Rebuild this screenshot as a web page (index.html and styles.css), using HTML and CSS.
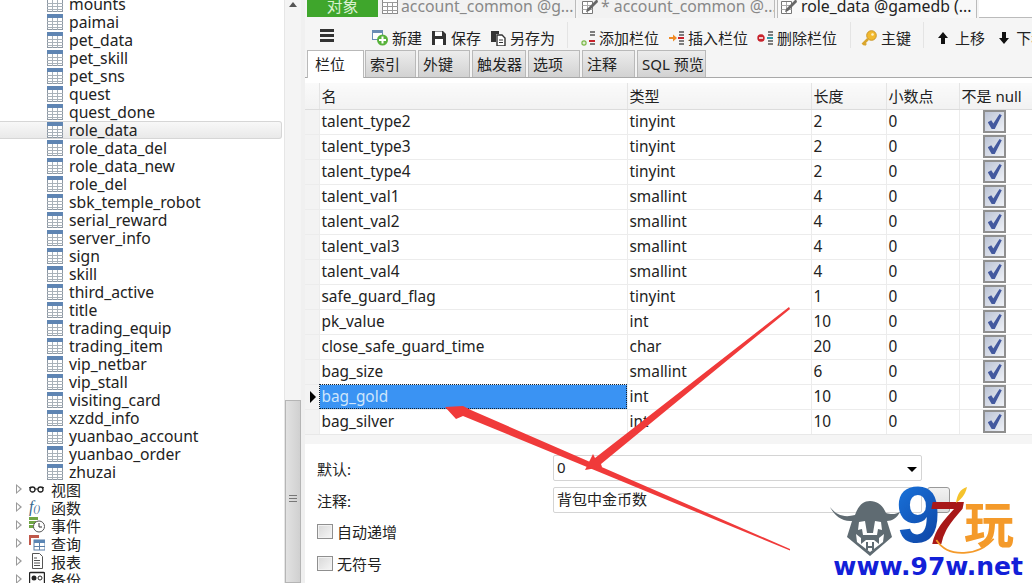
FILE: index.html
```html
<!DOCTYPE html>
<html lang="zh">
<head>
<meta charset="utf-8">
<title>role_data @gamedb</title>
<link rel="stylesheet" href="styles.css">
</head>
<body>
<div class="app">
  <aside class="side">
    <div class="tree">
      <ul class="tables">
        <li><svg class="ti"><use href="#tbl"/></svg>mounts</li>
        <li><svg class="ti"><use href="#tbl"/></svg>paimai</li>
        <li><svg class="ti"><use href="#tbl"/></svg>pet_data</li>
        <li><svg class="ti"><use href="#tbl"/></svg>pet_skill</li>
        <li><svg class="ti"><use href="#tbl"/></svg>pet_sns</li>
        <li><svg class="ti"><use href="#tbl"/></svg>quest</li>
        <li><svg class="ti"><use href="#tbl"/></svg>quest_done</li>
        <li class="cur"><svg class="ti"><use href="#tbl"/></svg>role_data</li>
        <li><svg class="ti"><use href="#tbl"/></svg>role_data_del</li>
        <li><svg class="ti"><use href="#tbl"/></svg>role_data_new</li>
        <li><svg class="ti"><use href="#tbl"/></svg>role_del</li>
        <li><svg class="ti"><use href="#tbl"/></svg>sbk_temple_robot</li>
        <li><svg class="ti"><use href="#tbl"/></svg>serial_reward</li>
        <li><svg class="ti"><use href="#tbl"/></svg>server_info</li>
        <li><svg class="ti"><use href="#tbl"/></svg>sign</li>
        <li><svg class="ti"><use href="#tbl"/></svg>skill</li>
        <li><svg class="ti"><use href="#tbl"/></svg>third_active</li>
        <li><svg class="ti"><use href="#tbl"/></svg>title</li>
        <li><svg class="ti"><use href="#tbl"/></svg>trading_equip</li>
        <li><svg class="ti"><use href="#tbl"/></svg>trading_item</li>
        <li><svg class="ti"><use href="#tbl"/></svg>vip_netbar</li>
        <li><svg class="ti"><use href="#tbl"/></svg>vip_stall</li>
        <li><svg class="ti"><use href="#tbl"/></svg>visiting_card</li>
        <li><svg class="ti"><use href="#tbl"/></svg>xzdd_info</li>
        <li><svg class="ti"><use href="#tbl"/></svg>yuanbao_account</li>
        <li><svg class="ti"><use href="#tbl"/></svg>yuanbao_order</li>
        <li><svg class="ti"><use href="#tbl"/></svg>zhuzai</li>
      </ul>
      <ul class="groups">
        <li><i class="tri"></i><svg class="gi" viewBox="0 0 16 16"><circle cx="3.500" cy="8.500" r="2.500" fill="none" stroke="#222" stroke-width="1.300"/><circle cx="11.500" cy="8.500" r="2.500" fill="none" stroke="#222" stroke-width="1.300"/><path d="M6 8h3M0 7l1.500-1M15 7l-1.500-1" stroke="#222" fill="none"/></svg>视图</li>
        <li><i class="tri"></i><span class="gi fx">f<small>()</small></span>函数</li>
        <li><i class="tri"></i><svg class="gi" viewBox="0 0 16 16"><rect x="0" y="0" width="9" height="3" fill="#6fa544"/><rect x="0" y="4" width="7" height="3" fill="#6fa544"/><rect x="0" y="8" width="6" height="3" fill="#6fa544"/><circle cx="10" cy="9.500" r="5.500" fill="#fff" stroke="#555"/><path d="M10 6v4h3" stroke="#333" fill="none"/></svg>事件</li>
        <li><i class="tri"></i><svg class="gi" viewBox="0 0 16 16"><rect x="0" y="0" width="10" height="3" fill="#c0584a"/><rect x="0" y="3" width="2" height="7" fill="#c0584a"/><rect x="5" y="5" width="11" height="10" fill="#fff" stroke="#5b7fa8"/><rect x="5" y="5" width="11" height="3" fill="#5b86b5"/><path d="M10.500 8v7M5 11.500h11" stroke="#5b7fa8"/></svg>查询</li>
        <li><i class="tri"></i><svg class="gi" viewBox="0 0 16 16"><path d="M3.500.5h7l3 3v12h-10z" fill="#fff" stroke="#555"/><path d="M5 5h3M5 7.500h6M5 10h6M5 12.500h6" stroke="#555"/></svg>报表</li>
        <li><i class="tri"></i><svg class="gi" viewBox="0 0 16 16"><rect x="0.500" y="1.500" width="15" height="13" rx="1" fill="#fff" stroke="#222" stroke-width="1.400"/><circle cx="5" cy="7" r="2.500" fill="#222"/><circle cx="11" cy="7" r="2" fill="none" stroke="#222"/></svg>备份</li>
      </ul>
    </div>
    <div class="vbar">
      <i class="up"></i>
      <div class="thumb"><b></b><b></b><b></b></div>
    </div>
  </aside>

  <main class="main">
    <nav class="doctabs">
      <div class="dt obj">对象</div>
      <div class="dt off first"><svg class="dti" viewBox="0 0 16 16"><use href="#tblg"/></svg>account_common @g...</div>
      <div class="dt off second"><svg class="dti" viewBox="0 0 16 16"><use href="#pen"/></svg>* account_common @...</div>
      <div class="dt on"><svg class="dti" viewBox="0 0 16 16"><use href="#pen"/></svg>role_data @gamedb (...</div>
      <div class="dt rest"></div>
    </nav>

    <div class="toolbar">
      <span class="menu"><b></b><b></b><b></b></span>
      <span class="tb t-new"><svg class="bi" viewBox="0 0 16 16"><rect x=".5" y=".5" width="10" height="9" fill="#fff" stroke="#6a8db5"/><rect x="0" y="0" width="11" height="3" fill="#6a8db5"/><circle cx="10.500" cy="10" r="5.500" fill="#58b23b"/><path d="M10.500 6.500v7M7 10h7" stroke="#fff" stroke-width="2"/></svg>新建</span>
      <span class="tb"><svg class="bi" viewBox="0 0 16 16"><path d="M1 1h11l3 3v11H1z" fill="#333"/><rect x="4" y="1.500" width="7" height="4.500" fill="#fff"/><rect x="4" y="9" width="8" height="6" fill="#fff"/></svg>保存</span>
      <span class="tb"><svg class="bi" viewBox="0 0 16 16"><path d="M1 1h8v3h-3v8H1z" fill="#333"/><path d="M7 5h5l3 3v8H7z" fill="#fff" stroke="#333" stroke-width="1.400"/><path d="M9 10h4M9 12.500h4" stroke="#333"/></svg>另存为</span>
      <i class="sep s1"></i>
      <span class="tb"><svg class="bi" viewBox="0 0 16 16"><use href="#cols"/><path d="M10 11h6" stroke="#c8232c" stroke-width="2"/><circle cx="5" cy="13" r="2.700" fill="#7cb84a"/><path d="M5 11.500v3M3.500 13h3" stroke="#fff"/></svg>添加栏位</span>
      <span class="tb"><svg class="bi" viewBox="0 0 16 16"><use href="#cols"/><path d="M1 8h5" stroke="#f08a24" stroke-width="2"/><path d="M5 4.500l4 3.500-4 3.500z" fill="#f08a24"/><path d="M10 8h6" stroke="#c8232c" stroke-width="2"/></svg>插入栏位</span>
      <span class="tb"><svg class="bi" viewBox="0 0 16 16"><use href="#cols"/><circle cx="4" cy="8" r="3.700" fill="#c8232c"/><path d="M2 8h4" stroke="#fff" stroke-width="1.500"/><path d="M10 8h6" stroke="#2a9aa8" stroke-width="2"/></svg>删除栏位</span>
      <i class="sep s2"></i>
      <span class="tb"><svg class="bi" viewBox="0 0 16 16"><circle cx="10.500" cy="5.500" r="4.800" fill="#f2b92e" stroke="#c9962a"/><circle cx="11.500" cy="4.500" r="1.300" fill="#fff3c4"/><path d="M7 9l-5.500 5.500M3 13l2 2" stroke="#d9a52c" stroke-width="2.600" fill="none"/></svg>主键</span>
      <i class="sep s3"></i>
      <span class="tb arrow"><svg class="ai" viewBox="0 0 12 14"><path d="M6 1l5 6H8v6H4V7H1z" fill="#111"/></svg>上移</span>
      <span class="tb arrow"><svg class="ai" viewBox="0 0 12 14"><path d="M6 13l5-6H8V1H4v6H1z" fill="#111"/></svg>下移</span>
    </div>

    <div class="tabs">
      <div class="tab act w57">栏位</div>
      <div class="tab w51">索引</div>
      <div class="tab w52">外键</div>
      <div class="tab w54">触发器</div>
      <div class="tab w52">选项</div>
      <div class="tab w53">注释</div>
      <div class="tab w69">SQL 预览</div>
    </div>

    <section class="grid-wrap">
      <table class="grid">
        <colgroup><col class="c0"><col class="c1"><col class="c2"><col class="c3"><col class="c4"><col class="c5"></colgroup>
        <thead><tr><th></th><th>名</th><th>类型</th><th>长度</th><th>小数点</th><th>不是 null</th></tr></thead>
        <tbody>
          <tr><td class="g"></td><td>talent_type2</td><td>tinyint</td><td>2</td><td>0</td><td><i class="ck"></i></td></tr>
          <tr><td class="g"></td><td>talent_type3</td><td>tinyint</td><td>2</td><td>0</td><td><i class="ck"></i></td></tr>
          <tr><td class="g"></td><td>talent_type4</td><td>tinyint</td><td>2</td><td>0</td><td><i class="ck"></i></td></tr>
          <tr><td class="g"></td><td>talent_val1</td><td>smallint</td><td>4</td><td>0</td><td><i class="ck"></i></td></tr>
          <tr><td class="g"></td><td>talent_val2</td><td>smallint</td><td>4</td><td>0</td><td><i class="ck"></i></td></tr>
          <tr><td class="g"></td><td>talent_val3</td><td>smallint</td><td>4</td><td>0</td><td><i class="ck"></i></td></tr>
          <tr><td class="g"></td><td>talent_val4</td><td>smallint</td><td>4</td><td>0</td><td><i class="ck"></i></td></tr>
          <tr><td class="g"></td><td>safe_guard_flag</td><td>tinyint</td><td>1</td><td>0</td><td><i class="ck"></i></td></tr>
          <tr><td class="g"></td><td>pk_value</td><td>int</td><td>10</td><td>0</td><td><i class="ck"></i></td></tr>
          <tr><td class="g"></td><td>close_safe_guard_time</td><td>char</td><td>20</td><td>0</td><td><i class="ck"></i></td></tr>
          <tr><td class="g"></td><td>bag_size</td><td>smallint</td><td>6</td><td>0</td><td><i class="ck"></i></td></tr>
          <tr class="sel"><td class="g"><i class="ptr"></i></td><td class="name">bag_gold</td><td>int</td><td>10</td><td>0</td><td><i class="ck"></i></td></tr>
          <tr><td class="g"></td><td>bag_silver</td><td>int</td><td>10</td><td>0</td><td><i class="ck"></i></td></tr>
        </tbody>
      </table>
    </section>

    <section class="form">
      <div class="frow"><label class="lab">默认:</label><div class="inp combo">0<i class="caret"></i></div></div>
      <div class="frow"><label class="lab">注释:</label><div class="inp">背包中金币数</div><button class="more"></button></div>
      <div class="crow first-c"><i class="box"></i>自动递增</div>
      <div class="crow"><i class="box"></i>无符号</div>
    </section>
  </main>
</div>

<svg class="marks" viewBox="0 0 1032 583">
  <polygon fill="#f03a3a" points="790,550.500 463,416 456,419 445,407 463,406 472,410.500 790,549"/>
  <polygon fill="#f03a3a" points="790,309 601,464 602,467 585,470 593,454 595,458 789,307"/>
</svg>

<div class="logo">
  <svg class="viking" viewBox="0 0 72 58">
    <path d="M0 7C6 15 14 18 25 15 28 6 33 1 40 1 48 1 53 6 56 13 62 15 66 14 70 12 67 18 62 21 57 21L62 37 40 56 17 37 22 21C12 22 4 15 0 7Z" fill="#5f6b72"/>
    <path d="M29 22 35 21 37 33H43L45 21 51 22 52 30 48 29 47 35H33L32 29 28 30Z" fill="#fff"/>
    <path d="M26 34 31 38V44L36 40H44L49 44V38L54 34 53 42 40 52 27 42Z" fill="#fff"/>
    <path d="M36 42H38V46H42V42H44V50H42V48H38V50H36Z" fill="#5f6b72"/>
  </svg>
  <span class="nine">9</span><span class="seven">7</span><span class="wan">玩</span>
  <svg class="swoosh" viewBox="0 0 90 30"><path d="M2 6c18 28 64 24 86-2" stroke="#f49a2a" stroke-width="2.500" fill="none"/></svg>
  <svg class="flame" viewBox="0 0 11 16"><path d="M11 0C4 2 1 8 0 16c4-3 9-7 11-16z" fill="#f5c32c"/></svg>
  <span class="site">www.97w.net</span>
</div>

<svg class="defs" aria-hidden="true">
  <defs>
    <symbol id="tbl" viewBox="0 0 16 16">
      <rect x=".5" y=".5" width="15" height="15" fill="#fff" stroke="#8d98a3"/>
      <rect x="0" y="0" width="16" height="4" fill="#5f85b3"/>
      <path d="M5.500 4v12M10.500 4v12M0 7.500h16M0 10.500h16M0 13.500h16" stroke="#a9b2ba"/>
    </symbol>
    <symbol id="tblg" viewBox="0 0 16 16">
      <rect x=".5" y=".5" width="15" height="15" fill="#fff" stroke="#8a8a8a"/>
      <path d="M.5 4.500h15M5.500 4v12M10.500 4v12M0 8.500h16M0 12.500h16" stroke="#9a9a9a"/>
    </symbol>
    <symbol id="pen" viewBox="0 0 16 16">
      <path d="M.5 3.500h10v12H.5z" fill="#fff" stroke="#777"/>
      <path d="M.5 7.500h10M.5 11.500h10M5.500 4v11" stroke="#aaa"/>
      <path d="M15 1l1 3-9 9-3 1 1-3z" fill="#666"/>
    </symbol>
    <symbol id="cols" viewBox="0 0 16 16">
      <path d="M11 2h5M11 5h5M11 11h5M11 14h5" stroke="#555" stroke-width="1.600"/>
    </symbol>
  </defs>
</svg>
</body>
</html>
```
FILE: styles.css
```css
* { box-sizing: border-box; }
html, body { margin: 0; height: 100%; overflow: hidden; }
body {
  font-family: "Noto Sans", "Noto Sans CJK SC", sans-serif;
  font-size: 15px;
  color: #222;
  background: #fff;
  position: relative;
}
ul { list-style: none; margin: 0; padding: 0; }
.app { display: flex; height: 583px; }

/* sidebar */
.side { width: 305px; flex: none; display: flex; overflow: hidden; background: #fff; }
.tree { width: 284px; flex: none; margin-top: -5px; }
.tables { font-size: 15.7px; }
.tables li { height: 18px; line-height: 18px; padding-left: 47px; display: flex; align-items: center; white-space: nowrap; }
.ti { width: 16px; height: 16px; margin-right: 6px; flex: none; }
.tables .cur { background: linear-gradient(#f8f8f8, #e9e9e9); border: 1px solid #d6d6d6; border-left: 0; border-radius: 0 3px 3px 0; width: 282px; }
.groups { margin-top: -1px; }
.groups li { height: 18px; display: flex; align-items: center; padding-left: 16px; white-space: nowrap; }
.tri { position: relative; width: 6px; height: 10px; margin-right: 7px; background: #9a9a9a; clip-path: polygon(0 0, 100% 50%, 0 100%); flex: none; }
.tri::after { content: ""; position: absolute; left: 1px; top: 2px; width: 3px; height: 6px; background: #fff; clip-path: polygon(0 0, 100% 50%, 0 100%); }
.gi { width: 16px; height: 16px; margin-right: 6px; flex: none; }
.fx { font-family: "Liberation Serif", serif; font-style: italic; color: #36688f; font-size: 16px; line-height: 16px; white-space: nowrap; }
.fx small { font-size: 10px; }
.vbar { width: 17px; flex: none; background: #f4f4f4; border-left: 1px solid #e6e6e6; position: relative; display: flex; flex-direction: column; }
.up { display: block; width: 0; height: 0; margin: 2px auto 0; border: 4px solid transparent; border-top: 0; border-bottom: 5px solid #555; }
.thumb { margin-top: 393px; flex: 1; background: linear-gradient(90deg, #e2e2e2, #d0d0d0); border: 1px solid #b5b5b5; display: flex; flex-direction: column; gap: 2px; align-items: center; padding-top: 94px; }
.thumb b { display: block; width: 8px; height: 1px; background: #777; }
.side::after { content: ""; width: 4px; flex: none; background: #f0f0f0; }

/* right panel */
.main { flex: 1; min-width: 0; background: #f5f5f5; display: flex; flex-direction: column; }
.doctabs { display: flex; height: 24px; margin-top: -6px; padding-left: 2px; gap: 2px; overflow: hidden; font-size: 15.8px; flex: none; }
.dt { height: 24px; display: flex; align-items: center; white-space: nowrap; overflow: hidden; flex: none; }
.dti { width: 16px; height: 16px; flex: none; }
.obj { width: 71px; height: 23px; background: #3fa62c; color: #d8f0cf; justify-content: center; }
.off { color: #888; background: #f2f2f2; border-right: 1px solid #bbb; }
.first { width: 196px; padding-left: 2px; }
.first .dti { margin-right: 3px; }
.second { width: 197px; padding-left: 4px; }
.second .dti { margin-right: 3px; }
.on { width: 200px; padding-left: 3px; background: #f8f8f8; color: #222; border: 1px solid #bbb; border-top: 0; border-bottom: 0; }
.on .dti { margin-right: 4px; }
.rest { flex: 1; background: #fff; border-bottom: 1px solid #bbb; }

.toolbar { height: 32px; flex: none; display: flex; align-items: center; padding: 8px 0 0 15px; gap: 9px; white-space: nowrap; overflow: hidden; line-height: 20px; }
.menu { display: flex; flex-direction: column; gap: 2px; width: 14px; flex: none; margin: -6px 29px 0 0; }
.menu b { display: block; height: 3px; background: #333; }
.tb { display: flex; align-items: center; flex: none; gap: 4px; }
.bi { width: 16px; height: 16px; flex: none; }
.ai { width: 12px; height: 14px; flex: none; margin-right: 2px; }
.sep { width: 1px; height: 26px; background: #e4e4e4; flex: none; margin-top: -6px; }
.s1 { margin-left: 3px; margin-right: 2px; }
.s2 { margin-left: 4px; margin-right: 1px; }
.s3 { margin-left: 3px; margin-right: 4px; }
.arrow + .arrow { margin-left: 4px; }

.tabs { height: 28px; flex: none; display: flex; gap: 2px; padding-left: 2px; position: relative; border-bottom: 1px solid #a9a9a9; }
.tab { height: 27px; padding: 0 0 2px 4px; display: flex; align-items: center; background: linear-gradient(#ececec, #d2d2d2); border: 1px solid #b9b9b9; border-bottom: 0; white-space: nowrap; flex: none; }
.tab.act { height: 28px; padding-left: 7px; background: #fff; margin-bottom: -1px; margin-right: -1px; position: relative; z-index: 1; }
.w57 { width: 57px; }
.w51 { width: 51px; }
.w52 { width: 52px; }
.w53 { width: 53px; }
.w54 { width: 54px; }
.w69 { width: 69px; }

.grid-wrap { background: #fff; padding-top: 5px; height: 357px; flex: none; overflow: hidden; border-bottom: 1px solid #e8e8e8; font-size: 15.4px; }
.grid { width: 727px; table-layout: fixed; border-collapse: collapse; }
.c0 { width: 14px; }
.c1 { width: 308px; }
.c2 { width: 184px; }
.c3 { width: 75px; }
.c4 { width: 73px; }
.grid th { height: 26px; padding: 0 0 1px 2px; font-weight: 400; font-size: 15px; text-align: left; background: linear-gradient(#fafafa, #f2f2f2); border-right: 1px solid #e4e4e4; border-bottom: 1px solid #dcdcdc; }
.grid td { height: 25px; padding: 0 0 0 2px; background: #fff; border-right: 1px solid #ececec; border-bottom: 1px solid #ececec; white-space: nowrap; }
.grid th:last-child { border-right: 0; }
.grid td:last-child { border-right: 0; text-align: center; padding: 0 3px 0 0; line-height: 0; }
.grid .g { background: #f3f3f3; position: relative; padding: 0; }
.ptr { display: block; width: 0; height: 0; margin-left: 5px; border-left: 6px solid #000; border-top: 6px solid transparent; border-bottom: 6px solid transparent; }
.sel .name { background: #3a93f3; color: #cfe6fb; outline: 1px dotted #123; outline-offset: -1px; }
.ck { display: inline-block; width: 23px; height: 23px; vertical-align: middle; border: 2px solid #8f8f8f; background: linear-gradient(135deg, #bcc4d6, #eef1f7); position: relative; }
.ck::after { content: ""; position: absolute; left: 3px; top: 2px; width: 14px; height: 15px; background: #43599f; clip-path: polygon(0 55%, 25% 42%, 40% 64%, 84% 0, 100% 8%, 50% 100%, 28% 100%); }

.form { flex: 1; background: #fff; margin-top: 9px; padding: 11px 0 0 12px; }
.frow { display: flex; align-items: center; height: 26px; margin-bottom: 6px; position: relative; }
.lab { width: 236px; flex: none; }
.inp { width: 369px; height: 26px; border: 1px solid #d4d4d4; border-radius: 2px; background: #fff; padding-left: 3px; line-height: 23px; position: relative; }
.caret { position: absolute; right: 4px; top: 11px; border: 5px solid transparent; border-top: 5px solid #000; border-bottom: 0; }
.more { width: 23px; height: 26px; margin-left: 5px; border: 1px solid #999; border-radius: 3px; background: linear-gradient(#f2f2f2, #dcdcdc); padding: 0; }
.crow { display: flex; align-items: center; height: 32px; }
.first-c { margin-top: -4px; }
.crow .box { width: 16px; height: 15px; border: 1px solid #8f8f8f; background: linear-gradient(135deg, #d8d8d8, #f6f6f6); margin-right: 4px; box-shadow: inset 0 0 0 1px #f2f2f2; }

/* hand-drawn annotation over the screenshot */
.marks { position: absolute; left: 0; top: 0; width: 1032px; height: 583px; pointer-events: none; }

/* watermark */
.logo { position: absolute; left: 830px; top: 486px; width: 202px; height: 97px; pointer-events: none; }
.viking { position: absolute; left: 0; top: 14px; width: 72px; height: 58px; }
.nine { position: absolute; left: 66px; top: -11px; font: 700 80px/80px "Liberation Sans", sans-serif; background: linear-gradient(135deg, #1a78e0, #0d3d9c); -webkit-background-clip: text; background-clip: text; color: transparent; }
.seven { position: absolute; left: 97px; top: 5px; font: italic 700 62px/64px "Liberation Sans", sans-serif; color: #a81818; }
.wan { position: absolute; left: 134px; top: 8px; font: 700 50px/54px "Noto Sans CJK SC", sans-serif; color: #f49a2a; }
.swoosh { position: absolute; left: 90px; top: 50px; width: 90px; height: 20px; }
.flame { position: absolute; left: 126px; top: 1px; width: 11px; height: 16px; }
.site { position: absolute; right: 9px; top: 67px; font: 700 25px/28px "DejaVu Sans", sans-serif; color: #1220d8; white-space: nowrap; }
.defs { position: absolute; width: 0; height: 0; }
```
